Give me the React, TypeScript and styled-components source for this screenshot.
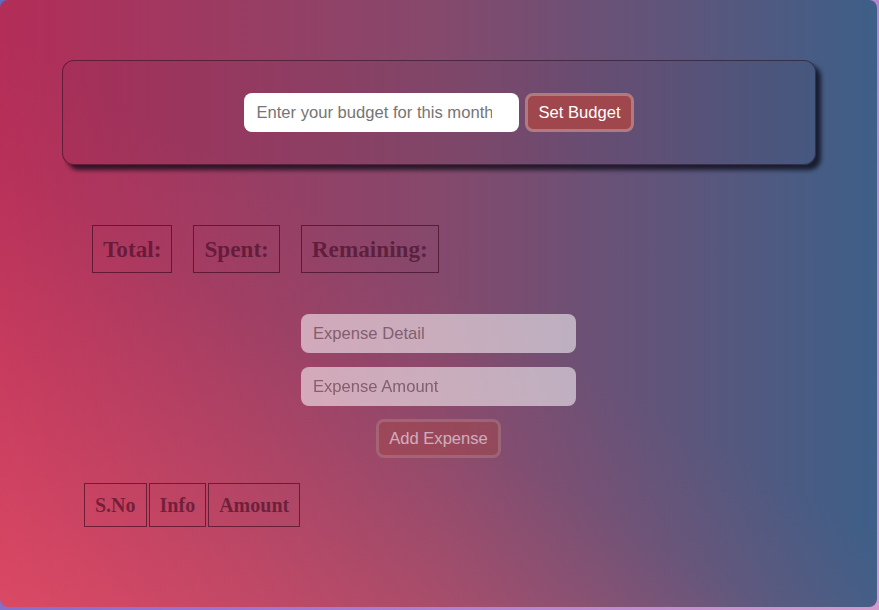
import React from "react";
import styled, { createGlobalStyle } from "styled-components";

const Global = createGlobalStyle`
  html, body { margin: 0; padding: 0; }
  body {
    width: 879px;
    height: 610px;
    overflow: hidden;
    background: linear-gradient(120deg, #5b6fc2 0%, #9a72d2 45%, #d59ace 100%);
    font-family: "Liberation Sans", Arial, sans-serif;
  }
`;

const Page = styled.div`
  width: 877px;
  height: 607px;
  border-radius: 8px;
  background:
    linear-gradient(
      30deg,
      rgba(235, 85, 105, 0.7) 0%,
      rgba(235, 85, 105, 0.32) 24%,
      rgba(235, 85, 105, 0.08) 40%,
      rgba(235, 85, 105, 0) 52%
    ),
    linear-gradient(to right, #b32d58 0%, #85496c 50%, #3d5f88 100%);
  display: flex;
  flex-direction: column;
  align-items: flex-start;
  box-sizing: border-box;
  padding-top: 60px;
`;

const BudgetCard = styled.div`
  align-self: stretch;
  margin: 0 61px 0 62px;
  height: 105px;
  box-sizing: border-box;
  border: 1px solid rgba(30, 10, 25, 0.5);
  border-radius: 12px;
  background: rgba(20, 0, 20, 0.04);
  box-shadow: 5px 5px 4px rgba(10, 10, 20, 0.75);
  display: flex;
  align-items: center;
  justify-content: center;
  gap: 6px;
`;

const TextInput = styled.input`
  width: 275px;
  height: 39px;
  box-sizing: border-box;
  border: none;
  border-radius: 8px;
  background: #ffffff;
  padding: 0 12px;
  font-family: "Liberation Sans", Arial, sans-serif;
  font-size: 16.6px;
  color: #333;
  outline: none;
  &::placeholder { color: #757575; }
`;

const ActionButton = styled.button`
  height: 39px;
  box-sizing: border-box;
  border: 3px solid #b07a7e;
  border-radius: 8px;
  background: #a0474d;
  color: #ffffff;
  padding: 0 10px 0 10px;
  font-family: "Liberation Sans", Arial, sans-serif;
  font-size: 16.6px;
  cursor: pointer;
`;

const Summary = styled.div`
  display: flex;
  gap: 21px;
  margin: 60px 0 0 92px;
`;

const StatBox = styled.div`
  border: 1px solid rgba(50, 5, 25, 0.6);
  padding: 10px 10px;
  font-family: "Liberation Serif", "Times New Roman", serif;
  font-weight: bold;
  font-size: 23.2px;
  line-height: 26px;
  color: rgba(60, 8, 32, 0.6);
`;

const ExpenseForm = styled.div`
  align-self: stretch;
  margin-top: 41px;
  display: flex;
  flex-direction: column;
  align-items: center;
  gap: 14px;
  opacity: 0.55;
  & > button { margin-top: -1px; }
`;

const Table = styled.table`
  margin: 23px 0 0 82px;
  border-spacing: 2px;
`;

const HeadCell = styled.th`
  border: 1px solid rgba(50, 5, 25, 0.6);
  padding: 10px 10px 10px 10px;
  font-family: "Liberation Serif", "Times New Roman", serif;
  font-weight: bold;
  font-size: 20px;
  line-height: 22px;
  color: rgba(60, 8, 32, 0.6);
`;

export default function App() {
  return (
    <>
      <Global />
      <Page>
        <BudgetCard>
          <TextInput type="number" placeholder="Enter your budget for this month" />
          <ActionButton>Set Budget</ActionButton>
        </BudgetCard>
        <Summary>
          <StatBox>Total:</StatBox>
          <StatBox>Spent:</StatBox>
          <StatBox>Remaining:</StatBox>
        </Summary>
        <ExpenseForm>
          <TextInput type="text" placeholder="Expense Detail" />
          <TextInput type="number" placeholder="Expense Amount" />
          <ActionButton>Add Expense</ActionButton>
        </ExpenseForm>
        <Table>
          <thead>
            <tr>
              <HeadCell>S.No</HeadCell>
              <HeadCell>Info</HeadCell>
              <HeadCell>Amount</HeadCell>
            </tr>
          </thead>
        </Table>
      </Page>
    </>
  );
}
